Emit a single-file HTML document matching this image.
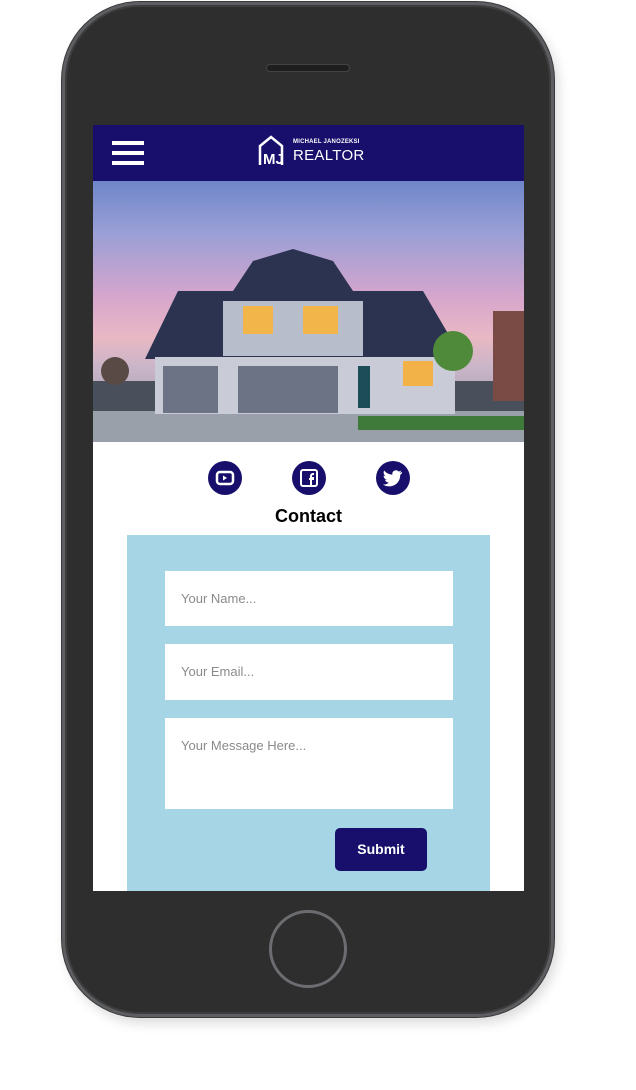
<!DOCTYPE html>
<html><head><meta charset="utf-8"><style>
*{margin:0;padding:0;box-sizing:border-box}
body{width:636px;height:1090px;background:#fff;position:relative;overflow:hidden;font-family:"Liberation Sans",sans-serif}
.phone{position:absolute;left:62px;top:2px;width:492px;height:1015px;border-radius:78px;background:#2e2e2e;border:3px solid #5c5e61;box-shadow:0 0 0 1px #3a3a3a,inset 0 0 0 2px #3d3d3d,4px 6px 12px rgba(0,0,0,.15)}
.speaker{position:absolute;left:266px;top:64px;width:84px;height:8px;border-radius:4px;background:#1e1e1e;border:1px solid #444}
.home{position:absolute;left:269px;top:910px;width:78px;height:78px;border-radius:50%;border:3px solid #6b6d70;background:#2e2e2e}
.screen{position:absolute;left:93px;top:125px;width:431px;height:766px;background:#fff;overflow:hidden}
.hdr{position:absolute;left:0;top:0;width:431px;height:56px;background:#170f6b}
.bar{position:absolute;left:19px;width:32px;height:4px;background:#fff}
.hero{position:absolute;left:0;top:56px;width:431px;height:261px;overflow:hidden;background:linear-gradient(180deg,#6f86c9 0%,#9a9fd6 20%,#d7a6cc 45%,#e9b8c4 60%,#c8b5c8 72%,#8e8e9a 100%)}
.form{position:absolute;left:34px;top:410px;width:363px;height:356px;background:#a6d6e6}
.inp{position:absolute;left:38px;width:288px;background:#fff;color:#8a8a8a;font-size:13px;padding-left:16px}
.btn{position:absolute;left:208px;top:293px;width:92px;height:43px;background:#170f6b;border-radius:5px;color:#fff;font-weight:bold;font-size:14px;text-align:center;line-height:43px}
.ic{position:absolute;top:336px;width:34px;height:34px;border-radius:50%;background:#170f6b}
</style></head><body>
<div class="phone"></div>
<div class="speaker"></div>
<div class="home"></div>
<div class="screen">
 <div class="hdr">
  <div class="bar" style="top:16px"></div><div class="bar" style="top:26px"></div><div class="bar" style="top:36px"></div>
  <svg style="position:absolute;left:165px;top:10px" width="30" height="32" viewBox="0 0 30 32"><path d="M2 30V11L13 2 24 11V30" fill="none" stroke="#fff" stroke-width="2.5"/><text x="5" y="29" fill="#fff" font-size="15" font-weight="bold" font-family="Liberation Sans">MJ</text></svg>
  <div style="position:absolute;left:200px;top:14px;color:#fff;font-size:6px;font-weight:bold;letter-spacing:.2px">MICHAEL JANOZEKSI</div>
  <div style="position:absolute;left:200px;top:22px;color:#fff;font-size:15px;letter-spacing:.3px">REALTOR</div>
 </div>
 <div class="hero">
  <svg width="431" height="261" viewBox="0 0 431 261">
   <rect x="0" y="200" width="431" height="61" fill="#4a4f5c"/>
   <rect x="0" y="230" width="431" height="31" fill="#9aa0aa"/>
   <rect x="265" y="235" width="166" height="14" fill="#3f7a3a"/>
   <polygon points="52,178 85,110 140,110 160,80 200,68 240,80 260,110 330,110 370,178" fill="#2c3350"/>
   <rect x="62" y="176" width="300" height="57" fill="#c9ccd6"/>
   <rect x="70" y="185" width="55" height="47" fill="#6c7385"/>
   <rect x="145" y="185" width="100" height="47" fill="#6c7385"/>
   <rect x="130" y="120" width="140" height="55" fill="#b8bdcc"/>
   <rect x="150" y="125" width="30" height="28" fill="#f1b54a"/>
   <rect x="210" y="125" width="35" height="28" fill="#f1b54a"/>
   <rect x="310" y="180" width="30" height="25" fill="#f2b247"/>
   <rect x="265" y="185" width="12" height="42" fill="#1d4d58"/>
   <rect x="400" y="130" width="31" height="90" fill="#7a4a45"/>
   <circle cx="360" cy="170" r="20" fill="#4f8a3a"/>
   <circle cx="22" cy="190" r="14" fill="#5a4a45"/>
  </svg>
 </div>
 <div class="ic" style="left:115px"><svg width="34" height="34" viewBox="0 0 34 34"><rect x="9" y="11" width="16" height="12" rx="3" fill="none" stroke="#fff" stroke-width="2.5"/><path d="M15 14.5v5l4-2.5z" fill="#fff"/></svg></div>
 <div class="ic" style="left:199px"><svg width="34" height="34" viewBox="0 0 34 34"><rect x="9" y="9" width="16" height="16" rx="2" fill="none" stroke="#fff" stroke-width="2"/><path d="M19 25v-8h3M17 18h5M19 17v-2a2 2 0 0 1 2-2h1" fill="none" stroke="#fff" stroke-width="2"/></svg></div>
 <div class="ic" style="left:283px"><svg width="34" height="34" viewBox="0 0 34 34"><path d="M26 11c-1 .5-1.8.7-2.5.8.9-.6 1.5-1.4 1.8-2.3-.8.5-1.8.9-2.7 1-2.5-2.7-7-.5-6.2 3.2-3.5-.2-6.3-1.8-8.2-4.2-1.1 2-.4 4.4 1.3 5.6-.7 0-1.3-.2-1.9-.5 0 2 1.4 3.7 3.3 4.1-.6.2-1.3.2-1.9.1.5 1.7 2.1 2.9 3.900 2.900-1.700 1.400-3.900 2-6 1.800 8 5 17.500-.300 17.300-9.600.800-.600 1.400-1.200 1.900-1.900z" fill="#fff"/></svg></div>
 <div style="position:absolute;left:0;width:431px;top:381px;text-align:center;font-weight:bold;font-size:18px;color:#000">Contact</div>
 <div class="form">
  <div class="inp" style="top:36px;height:55px;line-height:55px">Your Name...</div>
  <div class="inp" style="top:109px;height:56px;line-height:56px">Your Email...</div>
  <div class="inp" style="top:183px;height:91px;padding-top:20px">Your Message Here...</div>
  <div class="btn">Submit</div>
 </div>
</div>
</body></html>
